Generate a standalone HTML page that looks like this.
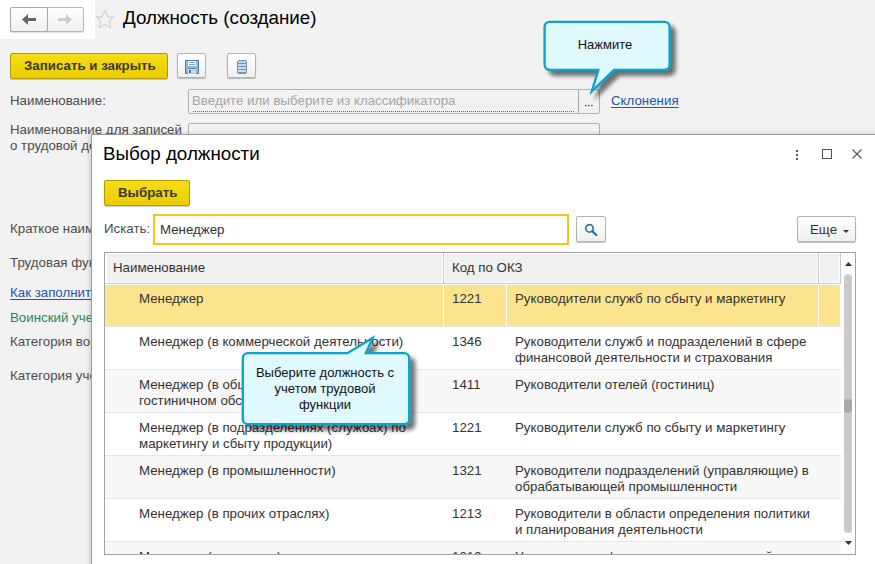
<!DOCTYPE html>
<html><head><meta charset="utf-8">
<style>
*{box-sizing:border-box;margin:0;padding:0}
html,body{width:875px;height:564px;overflow:hidden}
body{background:#f2f2f2;font-family:"Liberation Sans",sans-serif;font-size:13.3px;color:#4d4d4d;position:relative}
.a{position:absolute;white-space:nowrap}
.t{line-height:16px}
.btn{position:absolute;border:1px solid #b3b3b3;border-radius:2px;background:linear-gradient(#fff,#efefef);box-shadow:0 1px 1px rgba(0,0,0,.25)}
.ybtn{position:absolute;border:1px solid #b39c00;border-radius:2px;background:linear-gradient(#f6dd16,#eacd00);box-shadow:0 1px 1px rgba(0,0,0,.2);font-weight:bold;color:#3a3a3a}
</style></head><body>

<!-- top-left white nav area -->
<div class="a" style="left:0;top:0;width:95px;height:39px;background:#fff"></div>
<div class="a" style="left:10px;top:7px;width:74px;height:25px;border:1px solid #b8b8b8;border-radius:2px;background:linear-gradient(#fff,#f0f0f0);box-shadow:0 1px 1px rgba(0,0,0,.15)"></div>
<div class="a" style="left:10px;top:7px;width:38px;height:25px;border:1px solid #a9a9a9;border-radius:2px"></div>
<svg class="a" style="left:0;top:0" width="95" height="39">
  <path d="M22 19.5 L28 14 L28 18 L36 18 L36 21 L28 21 L28 25 Z" fill="#666"/>
  <path d="M72 19.5 L66 14 L66 18 L58 18 L58 21 L66 21 L66 25 Z" fill="#cdcdcd"/>
</svg>
<svg class="a" style="left:90px;top:5px" width="30" height="30" viewBox="0 0 30 30">
  <path d="M14.9 5.6 L18.2 11.9 L23.6 11.9 L19.2 16.1 L20.6 22.8 L14.9 19.6 L9.2 22.8 L10.6 16.1 L6.2 11.9 L11.6 11.9 Z" fill="none" stroke="#d0d0d0" stroke-width="1.1" stroke-linejoin="round"/>
</svg>
<div class="a" style="left:123px;top:6px;font-size:18.8px;line-height:24px;color:#000">Должность (создание)</div>

<!-- toolbar -->
<div class="ybtn" style="left:10px;top:53px;width:158px;height:26px;line-height:24px;padding-left:13px">Записать и закрыть</div>
<div class="btn" style="left:177px;top:53px;width:29px;height:25px"></div>
<svg class="a" style="left:185px;top:60px" width="14" height="14" viewBox="0 0 14 14" shape-rendering="crispEdges">
  <rect x="0" y="0" width="14" height="14" fill="#4f7cab"/>
  <rect x="1" y="1" width="12" height="12" fill="#8fb7df"/>
  <rect x="3" y="1" width="8" height="5" fill="#fdfdfd"/>
  <rect x="4" y="2" width="6" height="1" fill="#7a9fbd"/>
  <rect x="4" y="4" width="6" height="1" fill="#7a9fbd"/>
  <rect x="3" y="8" width="8" height="1" fill="#5e86b0"/>
  <rect x="3" y="9" width="8" height="5" fill="#d3d3d3"/>
  <rect x="4" y="10" width="2" height="3" fill="#3d74b8"/>
</svg>
<div class="btn" style="left:227px;top:53px;width:29px;height:25px"></div>
<svg class="a" style="left:237px;top:60px" width="10" height="14" viewBox="0 0 10 14" shape-rendering="crispEdges">
  <rect x="0" y="1" width="10" height="12" fill="#7595b0"/>
  <rect x="1" y="0" width="8" height="14" fill="#7595b0"/>
  <rect x="1" y="1" width="8" height="2" fill="#bfd1ec"/>
  <rect x="1" y="4" width="8" height="2" fill="#c2d6f2"/>
  <rect x="1" y="7" width="8" height="2" fill="#c6daf4"/>
  <rect x="1" y="10" width="8" height="2" fill="#c8e2f4"/>
</svg>

<!-- form fields -->
<div class="a t" style="left:10px;top:93px">Наименование:</div>
<div class="a" style="left:188px;top:89px;width:412px;height:25px;border:1px solid #b0b0b0;border-radius:2px"></div>
<div class="a" style="left:578px;top:90px;width:1px;height:23px;background:#ababab"></div>
<div class="a t" style="left:192px;top:93px;color:#a6a6a6">Введите или выберите из классификатора</div>
<div class="a" style="left:193px;top:111px;width:381px;height:1px;background-image:linear-gradient(90deg,#e43030 50%,transparent 50%);background-size:2px 1px"></div>
<svg class="a" style="left:580px;top:100px" width="16" height="10"><circle cx="5.9" cy="5.6" r="0.8" fill="#333"/><circle cx="8.9" cy="5.6" r="0.8" fill="#333"/><circle cx="11.9" cy="5.6" r="0.8" fill="#333"/></svg>
<div class="a t" style="left:611px;top:93px;color:#2455b0;text-decoration:underline;text-underline-offset:2px">Склонения</div>

<div class="a t" style="left:10px;top:122px;line-height:15.5px">Наименование для записей<br>о трудовой деятельности:</div>
<div class="a" style="left:188px;top:123px;width:412px;height:25px;border:1px solid #b0b0b0;border-radius:2px"></div>

<div class="a t" style="left:10px;top:221px">Краткое наименование:</div>
<div class="a t" style="left:10px;top:255px">Трудовая функция:</div>
<div class="a t" style="left:10px;top:285px;color:#2455b0;text-decoration:underline;text-underline-offset:2px">Как заполнить</div>
<div class="a t" style="left:10px;top:310px;color:#238a55">Воинский учет</div>
<div class="a t" style="left:10px;top:334px">Категория воинского учета:</div>
<div class="a t" style="left:10px;top:368px">Категория учета:</div>

<!-- callout 1 -->

<!-- dialog -->
<div class="a" style="left:91px;top:134px;width:790px;height:440px;background:#fff;border:1px solid #9a9a9a;box-shadow:-1px 0 5px rgba(0,0,0,.17)">
</div>
<div class="a" style="left:103px;top:142px;font-size:18.8px;line-height:24px;color:#000">Выбор должности</div>
<!-- header icons -->
<div class="a" style="left:796px;top:150px;width:2px;height:2px;background:#555"></div>
<div class="a" style="left:796px;top:154px;width:2px;height:2px;background:#555"></div>
<div class="a" style="left:796px;top:158px;width:2px;height:2px;background:#555"></div>
<div class="a" style="left:822px;top:149px;width:10px;height:10px;border:1px solid #555"></div>
<svg class="a" style="left:851px;top:148px" width="12" height="12"><path d="M1.5 1.5 L10.5 10.5 M10.5 1.5 L1.5 10.5" stroke="#555" stroke-width="1.1"/></svg>

<div class="ybtn" style="left:104px;top:180px;width:86px;height:26px;line-height:24px;padding-left:13px">Выбрать</div>
<div class="a t" style="left:104px;top:221px;color:#4d4d4d">Искать:</div>
<div class="a" style="left:153px;top:214px;width:416px;height:31px;border:2px solid #f5c518"></div>
<div class="a t" style="left:160px;top:222px;color:#333">Менеджер</div>
<div class="btn" style="left:576px;top:216px;width:30px;height:26px"></div>
<svg class="a" style="left:583px;top:222px" width="16" height="16" viewBox="0 0 16 16">
  <circle cx="6.5" cy="6.4" r="3.7" fill="none" stroke="#2f6eaa" stroke-width="1.7"/>
  <path d="M9.2 9.1 L13.3 13" stroke="#2f6eaa" stroke-width="2.2" stroke-linecap="round"/>
</svg>
<div class="btn" style="left:797px;top:216px;width:59px;height:26px"></div>
<div class="a t" style="left:810px;top:222px;color:#333">Еще</div>
<svg class="a" style="left:843px;top:230px" width="6" height="3"><path d="M0 0 L6 0 L3 3Z" fill="#333"/></svg>

<!-- table -->
<div class="a" style="left:104px;top:252px;width:752px;height:303px;border:1px solid #a3a3a3;background:#fff;overflow:hidden">
<div class="a" style="left:0px;top:0;width:339px;height:31px;border:1px solid #c8c8c8;border-top:0;background:#f0f0f0;box-shadow:inset 1px 1px 0 #fff,inset -1px -1px 0 #fff"></div>
<div class="a" style="left:338px;top:0;width:376px;height:31px;border:1px solid #c8c8c8;border-top:0;background:#f0f0f0;box-shadow:inset 1px 1px 0 #fff,inset -1px -1px 0 #fff"></div>
<div class="a" style="left:713px;top:0;width:23px;height:31px;border:1px solid #c8c8c8;border-top:0;background:#f0f0f0;box-shadow:inset 1px 1px 0 #fff,inset -1px -1px 0 #fff"></div>
<div class="a" style="left:0px;top:0;width:1px;height:30px;background:#fff"></div>
<div class="a t" style="left:8px;top:7px;color:#333">Наименование</div>
<div class="a t" style="left:347px;top:7px;color:#333">Код по ОКЗ</div>
<div class="a" style="left:0;top:31px;width:736px;height:42px;background:#fff"></div>
<div class="a" style="left:0;top:73px;width:736px;height:1px;background:#e6e6e6"></div>
<div class="a" style="left:0px;top:32px;width:338px;height:41px;background:#fce48e"></div>
<div class="a" style="left:339px;top:32px;width:62px;height:41px;background:#fce48e"></div>
<div class="a" style="left:402px;top:32px;width:311px;height:41px;background:#fce48e"></div>
<div class="a" style="left:714px;top:32px;width:21px;height:41px;background:#fce48e"></div>
<div class="a t" style="left:34px;top:38px;color:#333">Менеджер</div>
<div class="a t" style="left:347px;top:38px;color:#333">1221</div>
<div class="a t" style="left:410px;top:38px;color:#333">Руководители служб по сбыту и маркетингу</div>
<div class="a" style="left:0;top:74px;width:736px;height:42px;background:#fff"></div>
<div class="a" style="left:0;top:116px;width:736px;height:1px;background:#e6e6e6"></div>
<div class="a t" style="left:34px;top:81px;color:#333">Менеджер (в коммерческой деятельности)</div>
<div class="a t" style="left:347px;top:81px;color:#333">1346</div>
<div class="a t" style="left:410px;top:81px;color:#333">Руководители служб и подразделений в сфере<br>финансовой деятельности и страхования</div>
<div class="a" style="left:0;top:117px;width:736px;height:42px;background:#f8f8f8"></div>
<div class="a" style="left:0;top:159px;width:736px;height:1px;background:#e6e6e6"></div>
<div class="a t" style="left:34px;top:124px;color:#333">Менеджер (в общественном питании и<br>гостиничном обслуживании)</div>
<div class="a t" style="left:347px;top:124px;color:#333">1411</div>
<div class="a t" style="left:410px;top:124px;color:#333">Руководители отелей (гостиниц)</div>
<div class="a" style="left:0;top:160px;width:736px;height:42px;background:#fff"></div>
<div class="a" style="left:0;top:202px;width:736px;height:1px;background:#e6e6e6"></div>
<div class="a t" style="left:34px;top:167px;color:#333">Менеджер (в подразделениях (службах) по<br>маркетингу и сбыту продукции)</div>
<div class="a t" style="left:347px;top:167px;color:#333">1221</div>
<div class="a t" style="left:410px;top:167px;color:#333">Руководители служб по сбыту и маркетингу</div>
<div class="a" style="left:0;top:203px;width:736px;height:42px;background:#f8f8f8"></div>
<div class="a" style="left:0;top:245px;width:736px;height:1px;background:#e6e6e6"></div>
<div class="a t" style="left:34px;top:210px;color:#333">Менеджер (в промышленности)</div>
<div class="a t" style="left:347px;top:210px;color:#333">1321</div>
<div class="a t" style="left:410px;top:210px;color:#333">Руководители подразделений (управляющие) в<br>обрабатывающей промышленности</div>
<div class="a" style="left:0;top:246px;width:736px;height:42px;background:#fff"></div>
<div class="a" style="left:0;top:288px;width:736px;height:1px;background:#e6e6e6"></div>
<div class="a t" style="left:34px;top:253px;color:#333">Менеджер (в прочих отраслях)</div>
<div class="a t" style="left:347px;top:253px;color:#333">1213</div>
<div class="a t" style="left:410px;top:253px;color:#333">Руководители в области определения политики<br>и планирования деятельности</div>
<div class="a" style="left:0;top:289px;width:736px;height:42px;background:#f8f8f8"></div>
<div class="a" style="left:0;top:331px;width:736px;height:1px;background:#e6e6e6"></div>
<div class="a t" style="left:34px;top:296px;color:#333">Менеджер (в торговле)</div>
<div class="a t" style="left:347px;top:296px;color:#333">1319</div>
<div class="a t" style="left:410px;top:296px;color:#333">Управляющие финансово-экономической<br>деятельностью</div>
<div class="a" style="left:736px;top:0;width:14px;height:301px;background:#fff"></div>
<svg class="a" style="left:740px;top:9px" width="7" height="4"><path d="M3.5 0 L7 4 L0 4Z" fill="#333"/></svg>
<div class="a" style="left:739px;top:21px;width:8px;height:259px;border-radius:4px;background:#cacaca"></div>
<div class="a" style="left:739px;top:146px;width:8px;height:14px;border-radius:4px;background:#a9a9a9"></div>
<svg class="a" style="left:740px;top:288px" width="7" height="4"><path d="M0 0 L7 0 L3.5 4Z" fill="#333"/></svg>
</div>

<!-- callouts -->
<svg class="a" style="left:0;top:0;overflow:visible" width="875" height="564">
<defs><filter id="sh" x="-20%" y="-20%" width="140%" height="160%"><feGaussianBlur in="SourceAlpha" stdDeviation="2"/><feOffset dx="4.5" dy="4.5"/><feComponentTransfer><feFuncA type="linear" slope="0.55"/></feComponentTransfer><feMerge><feMergeNode/><feMergeNode in="SourceGraphic"/></feMerge></filter></defs>
<path filter="url(#sh)" d="M549.6,21.8 H664.6 A5,5 0 0 1 669.6,26.8 V64.8 A5,5 0 0 1 664.6,69.8 H614 L591.8,91.3 L598.4,69.8 H549.6 A5,5 0 0 1 544.6,64.8 V26.8 A5,5 0 0 1 549.6,21.8 Z" fill="#dff9fe" stroke="#08a2c9" stroke-width="2.3" stroke-miterlimit="10"/>
<path filter="url(#sh)" d="M247.8,353.2 H347.4 L372.7,338 L365.8,353.2 H404.2 A5,5 0 0 1 409.2,358.2 V419.2 A5,5 0 0 1 404.2,424.2 H247.8 A5,5 0 0 1 242.8,419.2 V358.2 A5,5 0 0 1 247.8,353.2 Z" fill="#dff9fe" stroke="#08a2c9" stroke-width="2.3" stroke-miterlimit="10"/>
</svg>
<div class="a t" style="left:542px;top:37px;width:126px;text-align:center;color:#111;font-size:13px">Нажмите</div>
<div class="a t" style="left:241px;top:365px;width:168px;text-align:center;color:#111;white-space:normal;font-size:13px">Выберите должность с<br>учетом трудовой<br>функции</div>


</body></html>
